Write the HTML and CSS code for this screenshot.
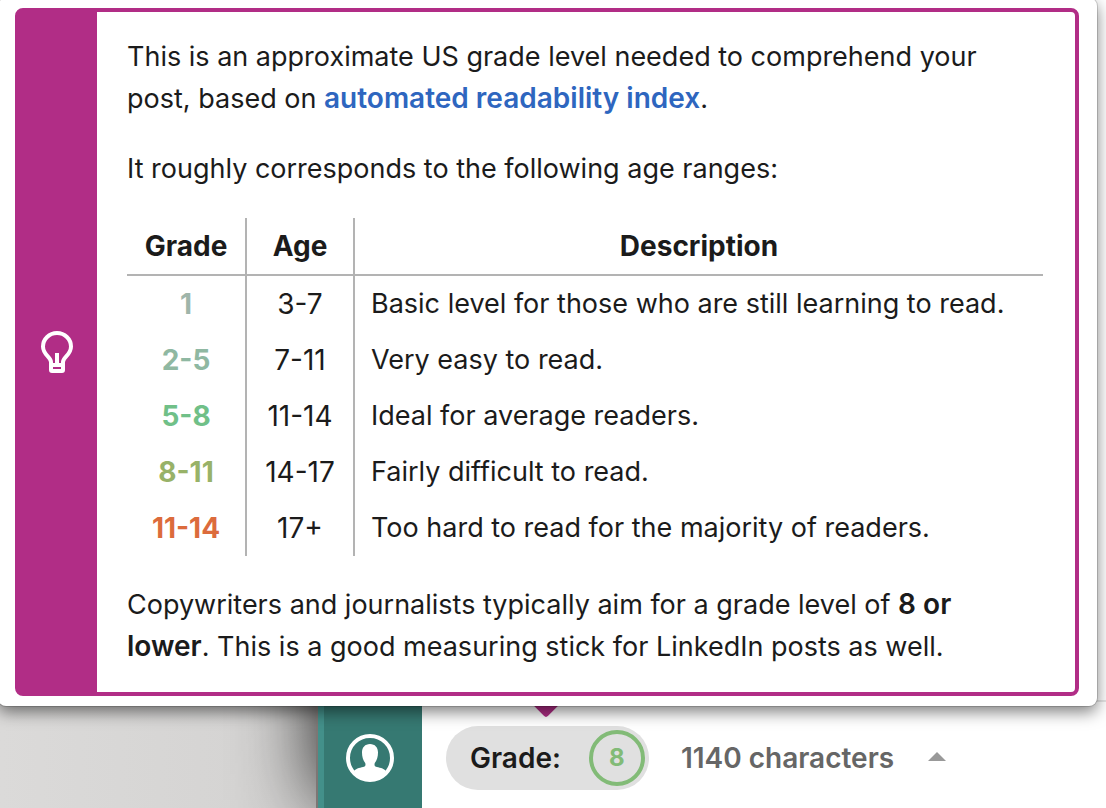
FILE: index.html
```html
<!DOCTYPE html>
<html lang="en">
<head>
  <meta charset="UTF-8" />
  <meta name="viewport" content="width=device-width, initial-scale=1.0"/>
  <title>Post editor - Readability grade</title>
  <link rel="stylesheet" href="styles.css">
</head>
<body>
  <!-- Editor -->
  <div class="workspace">
    <div class="backdrop"></div>
    <nav class="sidebar">
      <a href="#profile" class="profile-link" aria-label="Profile">
        <svg width="48" height="48" viewBox="0 0 48 48">
          <circle cx="24" cy="24" r="22" fill="none" stroke="#fff" stroke-width="4"/>
          <path fill="#fff" d="M24 10c-5 0-8 3.500-8 8.500 0 4 1 7.500 3.200 10.500.6 1.500.2 3-.7 3.600C15 34 10.500 34 8 37c3.500 5.500 9.500 9 16 9s12.500-3.500 16-9c-2.500-3-7-3-10.500-4.400-.9-.6-1.300-2.100-.7-3.600C31 26 32 22.500 32 18.500 32 13.500 29 10 24 10z"/>
        </svg>
      </a>
    </nav>
    <main class="editor">
      <div class="toolbar">
        <button type="button" class="grade-btn" aria-describedby="gradeTip">
          <span>Grade:</span>
          <span class="grade-value">8</span>
        </button>
        <span class="char-count">1140 characters</span>
        <button type="button" class="expand-btn" aria-label="Show details">
          <svg width="18" height="9" viewBox="0 0 18 9"><path d="M9 0l9 9H0z" fill="#999"/></svg>
        </button>
      </div>
    </main>
  </div>

  <!-- Grade popover -->
  <div class="popover" id="gradeTip" role="tooltip">
    <div class="tip">
      <div class="tip-icon">
        <svg width="32" height="42" viewBox="0 0 32 42">
          <path fill="none" stroke="#fff" stroke-width="4" d="M10 33v-2C10 26 2 24 2 15.500a14 13.500 0 0 1 28 0C30 24 22 26 22 31v2"/>
          <path fill="#fff" d="M14 22h4v10h-4z"/>
          <path fill="#fff" fill-rule="evenodd" d="M8 32h16v7a3 3 0 0 1-3 3H11a3 3 0 0 1-3-3zM12 36v2h8v-2z"/>
        </svg>
      </div>
      <div class="tip-body">
        <p>This is an approximate US grade level needed to comprehend your post, based on <a href="#readability">automated readability index</a>.</p>
        <p>It roughly corresponds to the following age ranges:</p>
        <table class="grades">
          <thead>
            <tr>
              <th class="col-grade">Grade</th>
              <th class="col-age">Age</th>
              <th>Description</th>
            </tr>
          </thead>
          <tbody>
            <tr>
              <td class="grade-1">1</td>
              <td>3-7</td>
              <td>Basic level for those who are still learning to read.</td>
            </tr>
            <tr>
              <td class="grade-2">2-5</td>
              <td>7-11</td>
              <td>Very easy to read.</td>
            </tr>
            <tr>
              <td class="grade-3">5-8</td>
              <td>11-14</td>
              <td>Ideal for average readers.</td>
            </tr>
            <tr>
              <td class="grade-4">8-11</td>
              <td>14-17</td>
              <td>Fairly difficult to read.</td>
            </tr>
            <tr>
              <td class="grade-5">11-14</td>
              <td>17+</td>
              <td>Too hard to read for the majority of readers.</td>
            </tr>
          </tbody>
        </table>
        <p>Copywriters and journalists typically aim for a grade level of <strong>8 or lower</strong>. This is a good measuring stick for LinkedIn posts as well.</p>
      </div>
    </div>
  </div>
</body>
</html>
```
FILE: styles.css
```css
* {
  box-sizing: border-box;
}

body {
  font-family: Inter, "Liberation Sans", sans-serif;
  font-size: 28px;
  line-height: 42px;
  margin: 0;
  color: #1b1b1b;
  background-color: white;
}

button {
  font: inherit;
  color: inherit;
  border: none;
  cursor: pointer;
}

svg {
  display: block;
}

/* Editor */
.workspace {
  display: flex;
  min-height: 100vh;
  overflow: hidden;
}

.backdrop {
  width: 318px;
  background: linear-gradient(to right, #dbdad9, #d3d2d1);
}

.sidebar {
  display: flex;
  flex-direction: column;
  justify-content: flex-end;
  align-items: center;
  width: 104px;
  padding-bottom: 26px;
  background: linear-gradient(to right, #43908a 6px, #367972 6px);
  box-shadow: 0 0 0 2px #7d7674, 0 -8px 80px rgba(0,0,0,0.9);
}

.editor {
  flex: 1;
  display: flex;
  align-items: flex-end;
  background-color: white;
  position: relative;
}

.toolbar {
  flex: 1;
  display: flex;
  align-items: center;
  padding: 24px 24px 18px;
  border-top: 2px solid #e6e6e6;
}

.grade-btn {
  position: relative;
  display: flex;
  align-items: center;
  gap: 28px;
  padding: 4px 4px 4px 24px;
  border-radius: 32px;
  background-color: #e0e0e0;
  font-weight: 600;
}

/* Popover arrow */
.grade-btn::before {
  content: "";
  position: absolute;
  left: 50%;
  bottom: 100%;
  width: 24px;
  height: 24px;
  margin: 0 0 13px -13px;
  border-radius: 3px;
  background-color: #b12d86;
  transform: rotate(45deg);
}

.grade-value {
  width: 56px;
  height: 56px;
  border: 4px solid #82bb77;
  border-radius: 50%;
  color: #82bb77;
  font-size: 24px;
  font-weight: 700;
  line-height: 48px;
  text-align: center;
}

.char-count {
  margin-left: 32px;
  color: #666;
  font-weight: 600;
}

.expand-btn {
  margin-left: 18px;
  padding: 14px 16px 18px;
  background: none;
}

/* Popover */
.popover {
  position: absolute;
  top: -2px;
  left: -2px;
  right: 9px;
  padding: 10px 18px 10px 17px;
  border-radius: 8px;
  background-color: white;
  box-shadow: 0 0 0 1px rgba(0,0,0,0.15), 0 6px 16px rgba(0,0,0,0.5);
}

.tip {
  display: flex;
  border: 4px solid #b12d86;
  border-radius: 8px;
}

.tip-icon {
  display: flex;
  align-items: center;
  justify-content: center;
  width: 78px;
  padding-right: 2px;
  background-color: #b12d86;
}

.tip-body {
  flex: 1;
  padding: 24px 32px 24px 30px;
}

.tip-body p {
  margin: 0 0 28px;
  padding-right: 16px;
  font-size: 27px;
}

.tip-body p:last-child {
  margin-bottom: 0;
}

.tip-body a,
.tip-body strong {
  font-size: 28px;
  font-weight: 600;
  line-height: 1;
}

.tip-body a {
  color: #2e66bf;
  text-decoration: none;
}

.grades {
  width: 100%;
  margin-bottom: 28px;
  border-spacing: 0;
}

.grades th,
.grades td {
  padding: 7px 16px;
  border-right: 2px solid #b3b3b3;
  text-align: center;
}

.grades th {
  border-bottom: 2px solid #b3b3b3;
  font-weight: 700;
}

.grades th:last-child,
.grades td:last-child {
  border-right: none;
}

.grades td:last-child {
  font-size: 27px;
  text-align: left;
}

.grades td:first-child {
  font-weight: 700;
}

.col-grade {
  width: 120px;
}

.col-age {
  width: 108px;
}

.grade-1 {
  color: #9fb5aa;
}

.grade-2 {
  color: #8fb8a2;
}

.grade-3 {
  color: #70c088;
}

.grade-4 {
  color: #98b268;
}

.grade-5 {
  color: #dc6b3c;
}
```
